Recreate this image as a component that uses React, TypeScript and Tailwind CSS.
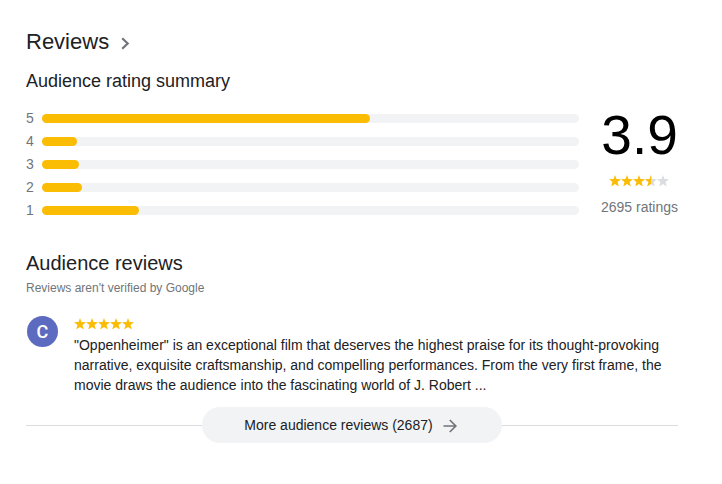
const ratings = [
  { stars: 5, width: 328 },
  { stars: 4, width: 35 },
  { stars: 3, width: 37 },
  { stars: 2, width: 40 },
  { stars: 1, width: 97 },
];

const STAR = "M6 0 7.45 4.1 12 4.3 8.5 7.1 9.8 11.5 6 8.9 2.2 11.5 3.5 7.1 0 4.3 4.55 4.1Z";

function Star({ fill = 1 }: { fill?: number }) {
  return (
    <svg width="12" height="12" viewBox="0 0 12 12" className="block shrink-0">
      {fill < 1 && <path d={STAR} fill="#dadce0" />}
      {fill > 0 && (
        <path d={STAR} fill="#fbbc04" style={{ clipPath: `inset(0 ${(1 - fill) * 100}% 0 0)` }} />
      )}
    </svg>
  );
}

export default function App() {
  return (
    <main
      className="h-[484px] w-[722px] overflow-hidden bg-white px-[26px] pt-[28px] text-[#202124]"
      style={{ fontFamily: '"Liberation Sans", Arial, sans-serif' }}
    >
      <div className="w-[652px]">
        <h1 className="flex h-7 items-center text-[22px] leading-7 whitespace-nowrap">
          Reviews
          <svg width="9" height="13" viewBox="0 0 9 13" className="mt-[3px] ml-[12px]">
            <path d="M1.2 1.2 6.7 6.5 1.2 11.8" fill="none" stroke="#70757a" strokeWidth="2.2" />
          </svg>
        </h1>
        <h2 className="mt-[13px] text-[18px] leading-6">Audience rating summary</h2>
        <section className="mt-[14px] flex h-[115px]">
          <div className="w-[553px]">
            {ratings.map((r) => (
              <div key={r.stars} className="flex h-[23px] items-center text-sm text-[#70757a]">
                <span className="w-4 leading-[23px]">{r.stars}</span>
                <div className="h-[9px] w-[537px] rounded-full bg-[#f1f3f4]">
                  <div className="h-[9px] rounded-full bg-[#fbbc04]" style={{ width: r.width }} />
                </div>
              </div>
            ))}
          </div>
          <div className="ml-[21px] flex w-[79px] flex-col items-center">
            <div className="h-[60px] pl-px text-[55px] leading-[56px] text-black">3.9</div>
            <div className="mt-[8px] flex">
              <Star /><Star /><Star /><Star fill={0.5} /><Star fill={0} />
            </div>
            <div className="mt-[10px] pl-px text-sm leading-5 whitespace-nowrap text-[#70757a]">2695 ratings</div>
          </div>
        </section>
        <h2 className="mt-[27px] text-xl leading-7">Audience reviews</h2>
        <p className="mt-[3px] text-xs leading-4 text-[#70757a]">Reviews aren't verified by Google</p>
        <article className="mt-5 flex">
          <div className="ml-px flex size-[31px] items-center justify-center rounded-full bg-[#5c6bc0] font-[Roboto,sans-serif] text-[18px] font-medium text-white">C</div>
          <div className="ml-4 pt-[2px]">
            <div className="flex"><Star /><Star /><Star /><Star /><Star /></div>
            <p className="mt-[5px] text-sm leading-5 whitespace-nowrap">
              "Oppenheimer" is an exceptional film that deserves the highest praise for its thought-provoking<br />
              narrative, exquisite craftsmanship, and compelling performances. From the very first frame, the<br />
              movie draws the audience into the fascinating world of J. Robert ...
            </p>
          </div>
        </article>
        <div className="mt-[12px] flex items-center">
          <div className="h-px flex-1 bg-[#dadce0]" />
          <button className="flex h-9 w-[300px] items-center justify-center rounded-full bg-[#f1f3f4] pr-[3px] text-sm">
            More audience reviews (2687)
            <svg width="14" height="14" viewBox="0 0 14 14" className="mt-px ml-[10px]">
              <path d="M0.5 7H12.5M6.8 1 12.8 7 6.8 13" fill="none" stroke="#70757a" strokeWidth="1.7" />
            </svg>
          </button>
          <div className="h-px flex-1 bg-[#dadce0]" />
        </div>
      </div>
    </main>
  );
}
